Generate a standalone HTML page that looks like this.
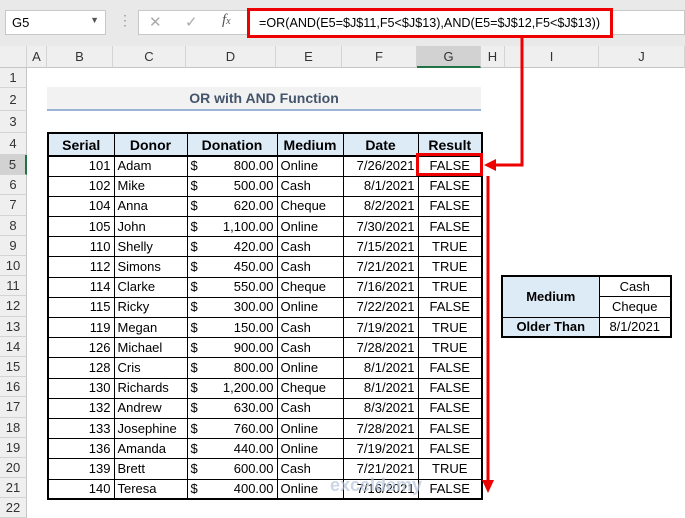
<!DOCTYPE html>
<html><head><meta charset="utf-8"><style>
*{margin:0;padding:0;box-sizing:border-box}
body{width:685px;height:514px;overflow:hidden;background:#fff;font-family:"Liberation Sans",Arial,sans-serif;font-size:13px;color:#000;position:relative}
.a{position:absolute}
.top{left:0;top:0;width:685px;height:46px;background:#e9e9e9}
.nb{left:5px;top:10px;width:101px;height:25px;background:#fff;border:1px solid #c8c8c8;font-size:13px;padding:4px 6px}
.fb{left:138px;top:10px;width:547px;height:25px;background:#fff;border:1px solid #c8c8c8}
.colh{top:46px;height:22px;background:#efefef;border-right:1px solid #d4d4d4;border-bottom:1px solid #c6c6c6;text-align:center;line-height:22px;color:#333}
.rowh{left:0;width:27px;background:#efefef;border-bottom:1px solid #d4d4d4;border-right:1px solid #c6c6c6;text-align:center;color:#333}
table{position:absolute;border-collapse:collapse;table-layout:fixed}
td{border:1px solid #000;height:20.2px;padding:0 3px;white-space:nowrap;overflow:hidden;line-height:18px}
</style></head><body>
<div class="a top"></div>
<div class="a nb">G5<span style="position:absolute;right:6px;top:4px;font-size:9px;color:#555">▼</span></div>
<div class="a" style="left:118px;top:12px;color:#999;font-size:14px">⋮</div>
<div class="a fb"></div>
<div class="a" style="left:149px;top:13px;color:#aaa;font-size:15px">✕</div>
<div class="a" style="left:185px;top:13px;color:#aaa;font-size:15px">✓</div>
<div class="a" style="left:222px;top:12px;color:#555;font-style:italic;font-family:'Liberation Serif',serif;font-size:15px">f<span style="font-size:10px">x</span></div>
<div class="a" style="left:247px;top:8px;width:366px;height:30px;border:3px solid #e00;background:#fff;font-size:12.6px;line-height:24px;padding-left:9px;white-space:nowrap;overflow:hidden">=OR(AND(E5=$J$11,F5&lt;$J$13),AND(E5=$J$12,F5&lt;$J$13))</div>

<div class="a colh" style="left:0;width:27px"></div>
<div class="a colh" style="left:27px;width:20px">A</div>
<div class="a colh" style="left:47px;width:66px">B</div>
<div class="a colh" style="left:113px;width:73px">C</div>
<div class="a colh" style="left:186px;width:90px">D</div>
<div class="a colh" style="left:276px;width:66px">E</div>
<div class="a colh" style="left:342px;width:75px">F</div>
<div class="a colh" style="left:417px;width:64px;background:#d2d2d2;border-bottom:2px solid #217346">G</div>
<div class="a colh" style="left:481px;width:24px">H</div>
<div class="a colh" style="left:505px;width:94px">I</div>
<div class="a colh" style="left:599px;width:86px">J</div>

<div class="a rowh" style="top:68px;height:20px;line-height:20px">1</div>
<div class="a rowh" style="top:88px;height:23px;line-height:23px">2</div>
<div class="a rowh" style="top:111px;height:22px;line-height:22px">3</div>
<div class="a rowh" style="top:133px;height:22px;line-height:22px">4</div>
<div class="a rowh" style="top:155px;height:20.2px;line-height:20px;background:#d2d2d2;border-right:2px solid #217346">5</div>
<div class="a rowh" style="top:175.2px;height:20.2px;line-height:20px">6</div>
<div class="a rowh" style="top:195.4px;height:20.2px;line-height:20px">7</div>
<div class="a rowh" style="top:215.6px;height:20.2px;line-height:20px">8</div>
<div class="a rowh" style="top:235.8px;height:20.2px;line-height:20px">9</div>
<div class="a rowh" style="top:256px;height:20.2px;line-height:20px">10</div>
<div class="a rowh" style="top:276.2px;height:20.2px;line-height:20px">11</div>
<div class="a rowh" style="top:296.4px;height:20.2px;line-height:20px">12</div>
<div class="a rowh" style="top:316.6px;height:20.2px;line-height:20px">13</div>
<div class="a rowh" style="top:336.8px;height:20.2px;line-height:20px">14</div>
<div class="a rowh" style="top:357px;height:20.2px;line-height:20px">15</div>
<div class="a rowh" style="top:377.2px;height:20.2px;line-height:20px">16</div>
<div class="a rowh" style="top:397.4px;height:20.2px;line-height:20px">17</div>
<div class="a rowh" style="top:417.6px;height:20.2px;line-height:20px">18</div>
<div class="a rowh" style="top:437.8px;height:20.2px;line-height:20px">19</div>
<div class="a rowh" style="top:458px;height:20.2px;line-height:20px">20</div>
<div class="a rowh" style="top:478.2px;height:20.2px;line-height:20px">21</div>
<div class="a rowh" style="top:498.4px;height:20px;line-height:20px">22</div>

<div class="a" style="left:47px;top:87px;width:434px;height:24px;background:#f2f2f2;border-bottom:2px solid #9bb3d6;text-align:center;font-weight:bold;font-size:14px;line-height:22px;color:#44546a">OR with AND Function</div>

<table style="left:47px;top:132px;width:434px;border:2px solid #000">
<colgroup><col style="width:66px"><col style="width:73px"><col style="width:90px"><col style="width:66px"><col style="width:75px"><col style="width:64px"></colgroup>
<tr style="background:#ddebf7;font-weight:bold;text-align:center;font-size:14px"><td style="height:23px;border-bottom:2px solid #000">Serial</td><td style="border-bottom:2px solid #000">Donor</td><td style="border-bottom:2px solid #000">Donation</td><td style="border-bottom:2px solid #000">Medium</td><td style="border-bottom:2px solid #000">Date</td><td style="border-bottom:2px solid #000">Result</td></tr>
<tr><td align="right">101</td><td>Adam</td><td>$<span style="float:right">800.00</span></td><td>Online</td><td align="right">7/26/2021</td><td align="center">FALSE</td></tr>
<tr><td align="right">102</td><td>Mike</td><td>$<span style="float:right">500.00</span></td><td>Cash</td><td align="right">8/1/2021</td><td align="center">FALSE</td></tr>
<tr><td align="right">104</td><td>Anna</td><td>$<span style="float:right">620.00</span></td><td>Cheque</td><td align="right">8/2/2021</td><td align="center">FALSE</td></tr>
<tr><td align="right">105</td><td>John</td><td>$<span style="float:right">1,100.00</span></td><td>Online</td><td align="right">7/30/2021</td><td align="center">FALSE</td></tr>
<tr><td align="right">110</td><td>Shelly</td><td>$<span style="float:right">420.00</span></td><td>Cash</td><td align="right">7/15/2021</td><td align="center">TRUE</td></tr>
<tr><td align="right">112</td><td>Simons</td><td>$<span style="float:right">450.00</span></td><td>Cash</td><td align="right">7/21/2021</td><td align="center">TRUE</td></tr>
<tr><td align="right">114</td><td>Clarke</td><td>$<span style="float:right">550.00</span></td><td>Cheque</td><td align="right">7/16/2021</td><td align="center">TRUE</td></tr>
<tr><td align="right">115</td><td>Ricky</td><td>$<span style="float:right">300.00</span></td><td>Online</td><td align="right">7/22/2021</td><td align="center">FALSE</td></tr>
<tr><td align="right">119</td><td>Megan</td><td>$<span style="float:right">150.00</span></td><td>Cash</td><td align="right">7/19/2021</td><td align="center">TRUE</td></tr>
<tr><td align="right">126</td><td>Michael</td><td>$<span style="float:right">900.00</span></td><td>Cash</td><td align="right">7/28/2021</td><td align="center">TRUE</td></tr>
<tr><td align="right">128</td><td>Cris</td><td>$<span style="float:right">800.00</span></td><td>Online</td><td align="right">8/1/2021</td><td align="center">FALSE</td></tr>
<tr><td align="right">130</td><td>Richards</td><td>$<span style="float:right">1,200.00</span></td><td>Cheque</td><td align="right">8/1/2021</td><td align="center">FALSE</td></tr>
<tr><td align="right">132</td><td>Andrew</td><td>$<span style="float:right">630.00</span></td><td>Cash</td><td align="right">8/3/2021</td><td align="center">FALSE</td></tr>
<tr><td align="right">133</td><td>Josephine</td><td>$<span style="float:right">760.00</span></td><td>Online</td><td align="right">7/28/2021</td><td align="center">FALSE</td></tr>
<tr><td align="right">136</td><td>Amanda</td><td>$<span style="float:right">440.00</span></td><td>Online</td><td align="right">7/19/2021</td><td align="center">FALSE</td></tr>
<tr><td align="right">139</td><td>Brett</td><td>$<span style="float:right">600.00</span></td><td>Cash</td><td align="right">7/21/2021</td><td align="center">TRUE</td></tr>
<tr><td align="right">140</td><td>Teresa</td><td>$<span style="float:right">400.00</span></td><td>Online</td><td align="right">7/16/2021</td><td align="center">FALSE</td></tr>
</table>

<table style="left:501px;top:275px;width:169px;border:2px solid #000">
<colgroup><col style="width:97px"><col style="width:72px"></colgroup>
<tr><td rowspan="2" align="center" style="background:#ddebf7;font-weight:bold;height:41px">Medium</td><td align="center" style="height:20px">Cash</td></tr>
<tr><td align="center" style="height:20px">Cheque</td></tr>
<tr><td align="center" style="background:#ddebf7;font-weight:bold;height:20px">Older Than</td><td align="center">8/1/2021</td></tr>
</table>

<div class="a" style="left:330px;top:475px;color:#b9c6dc;font-size:18px;font-weight:bold;opacity:.7">exceldemy</div>

<div class="a" style="left:416px;top:153px;width:67px;height:23px;border:3px solid #e00"></div>
<svg class="a" style="left:0;top:0" width="685" height="514">
<polyline points="522,38 522,165 494,165" fill="none" stroke="#e00" stroke-width="3"/>
<polygon points="484,165 496,159 496,171" fill="#e00"/>
<line x1="488" y1="176" x2="488" y2="482" stroke="#e00" stroke-width="3"/>
<polygon points="482,480 494,480 488,493" fill="#e00"/>
</svg>
</body></html>
